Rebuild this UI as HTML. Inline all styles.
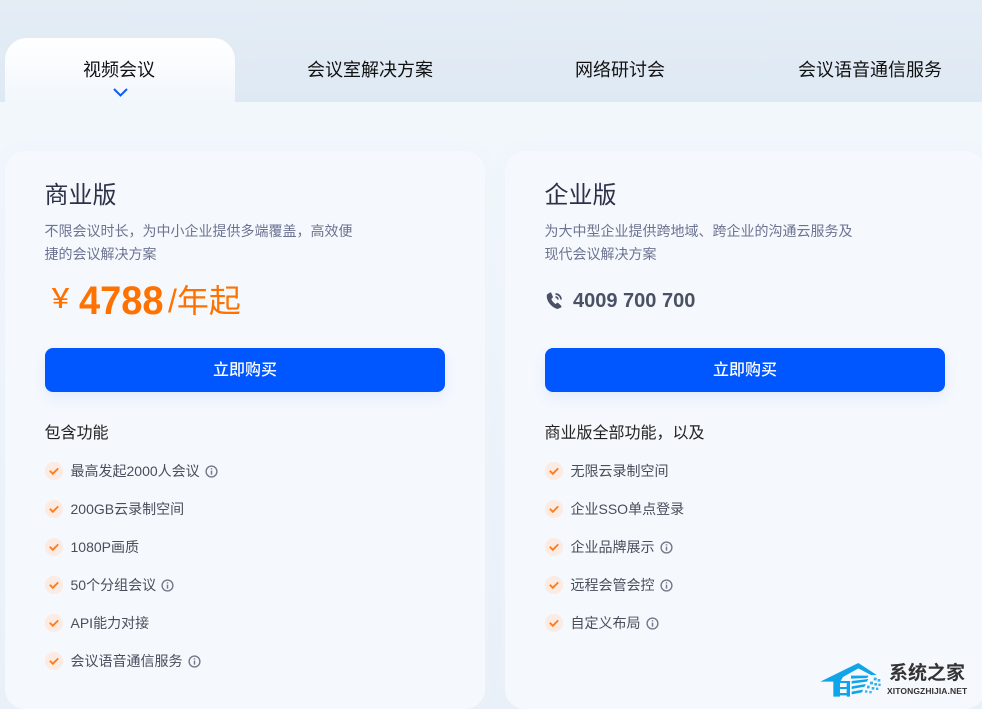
<!DOCTYPE html>
<html lang="zh"><head><meta charset="utf-8"><style>
html,body{margin:0;padding:0;overflow:hidden;width:982px;height:709px}
#w{width:982px;height:709px;overflow:hidden;position:relative;background:#f2f6fb;font-family:"Liberation Sans","Noto Sans CJK SC",sans-serif}
.a{position:absolute;white-space:nowrap}
.band{left:0;top:0;width:982px;height:102px;background:linear-gradient(180deg,#e4edf6,#dfe9f3)}
.lower{left:0;top:102px;width:982px;height:607px;background:linear-gradient(180deg,#f2f7fc 5%,#e9f0f8)}
.tab0{left:5px;top:38px;width:230px;height:64px;border-radius:22px 22px 0 0;background:linear-gradient(180deg,#fff,#f2f7fc)}
.t{top:58px;font-size:18px;line-height:25px;color:#111;text-align:center}
.card{top:151px;width:480px;height:558px;border-radius:20px;background:#f5f8fd;box-shadow:0 0 14px rgba(238,243,250,.8)}
h3{position:absolute;margin:0;top:180px;font-size:24px;line-height:32px;font-weight:400;color:#2e3249}
.d{top:220px;font-size:14px;line-height:22.500px;color:#6c7391}
.btn{top:348px;width:400px;height:44px;border-radius:8px;background:#0056ff;color:#fff;font-size:16px;font-weight:500;line-height:45px;text-align:center;box-shadow:0 6px 14px rgba(0,86,255,.08)}
.h{top:423px;font-size:16px;line-height:22px;color:#222}
.i{font-size:14px;line-height:20px;color:#4a4d5a}
.c{width:18px;height:18px}
.n{width:13px;height:13px}
</style></head><body><div id="w">
<div class="a band"></div><div class="a lower"></div><div class="a tab0"></div>
<div class="a t" style="left:4px;width:230px">视频会议</div>
<svg class="a" style="left:112px;top:87px" width="17" height="11" viewBox="0 0 17 11"><path d="M2 2l6.500 6.500L15 2" fill="none" stroke="#0d5cf5" stroke-width="2"/></svg>
<div class="a t" style="left:255px;width:230px">会议室解决方案</div>
<div class="a t" style="left:505px;width:230px">网络研讨会</div>
<div class="a t" style="left:755px;width:230px">会议语音通信服务</div>

<div class="a card" style="left:5px"></div><div class="a card" style="left:505px"></div>

<h3 style="left:44.500px">商业版</h3>
<div class="a d" style="left:44.500px">不限会议时长，为中小企业提供多端覆盖，高效便<br>捷的会议解决方案</div>
<div class="a" style="left:47px;top:281px;font-size:27px;line-height:36px;font-weight:500;color:#ff7200">￥</div>
<div class="a" style="left:79px;top:277px;font-size:40px;line-height:48px;font-weight:700;color:#ff7200;transform-origin:0 50%;transform:scaleX(.95)">4788</div>
<div class="a" style="left:168px;top:279px;font-size:32px;line-height:44px;color:#ff7200">/年起</div>
<div class="a btn" style="left:45px">立即购买</div>
<div class="a h" style="left:44.500px">包含功能</div>

<h3 style="left:544.500px">企业版</h3>
<div class="a d" style="left:544.500px">为大中型企业提供跨地域、跨企业的沟通云服务及<br>现代会议解决方案</div>
<svg class="a" style="left:545px;top:291px" width="19" height="19" viewBox="0 0 19 19"><path d="M5 1.500L2 3.500C.8 8 4.500 15.500 12.500 18l3.500-1.500c.7-.6.6-1.300 0-1.900l-2.600-2.500c-.6-.5-1.200-.5-1.700 0l-1 1C8.200 11.500 7 9.800 6.300 8l1.200-1c.5-.5.5-1.100.2-1.700L6.300 2C5.900 1.400 5.500 1.300 5 1.500z" fill="#4a5164"/><path d="M10.500 3a5.500 5.500 0 0 1 5.500 5.500M10.500 6a2.500 2.500 0 0 1 2.500 2.500" fill="none" stroke="#4a5164" stroke-width="1.700"/></svg>
<div class="a" style="left:573px;top:287px;font-size:20px;line-height:28px;font-weight:700;color:#4a5164">4009 700 700</div>
<div class="a btn" style="left:545px">立即购买</div>
<div class="a h" style="left:544.500px">商业版全部功能，以及</div>

<svg width="0" height="0" style="position:absolute"><defs>
<symbol id="ck" viewBox="0 0 18 18"><circle cx="9" cy="9" r="9" fill="#fbebe3"/><path d="M4.800 8.800l3 3 5.400-5.400" fill="none" stroke="#ff7a1a" stroke-width="1.800"/></symbol>
<symbol id="nf" viewBox="0 0 13 13"><circle cx="6.500" cy="6.500" r="5.400" fill="none" stroke="#737989" stroke-width="1.400"/><path d="M6.500 5.600v4M6.500 3.200v1.300" stroke="#737989" stroke-width="1.500"/></symbol>
</defs></svg>

<svg class="a c" style="left:45px;top:462px"><use href="#ck"/></svg><div class="a i" style="left:70.500px;top:461px">最高发起2000人会议</div><svg class="a n" style="left:205px;top:465px"><use href="#nf"/></svg>
<svg class="a c" style="left:45px;top:500px"><use href="#ck"/></svg><div class="a i" style="left:70.500px;top:499px">200GB云录制空间</div>
<svg class="a c" style="left:45px;top:538px"><use href="#ck"/></svg><div class="a i" style="left:70.500px;top:537px">1080P画质</div>
<svg class="a c" style="left:45px;top:576px"><use href="#ck"/></svg><div class="a i" style="left:70.500px;top:575px">50个分组会议</div><svg class="a n" style="left:161px;top:579px"><use href="#nf"/></svg>
<svg class="a c" style="left:45px;top:614px"><use href="#ck"/></svg><div class="a i" style="left:70.500px;top:613px">API能力对接</div>
<svg class="a c" style="left:45px;top:652px"><use href="#ck"/></svg><div class="a i" style="left:70.500px;top:651px">会议语音通信服务</div><svg class="a n" style="left:188px;top:655px"><use href="#nf"/></svg>

<svg class="a c" style="left:545px;top:462px"><use href="#ck"/></svg><div class="a i" style="left:570.500px;top:461px">无限云录制空间</div>
<svg class="a c" style="left:545px;top:500px"><use href="#ck"/></svg><div class="a i" style="left:570.500px;top:499px">企业SSO单点登录</div>
<svg class="a c" style="left:545px;top:538px"><use href="#ck"/></svg><div class="a i" style="left:570.500px;top:537px">企业品牌展示</div><svg class="a n" style="left:660px;top:541px"><use href="#nf"/></svg>
<svg class="a c" style="left:545px;top:576px"><use href="#ck"/></svg><div class="a i" style="left:570.500px;top:575px">远程会管会控</div><svg class="a n" style="left:660px;top:579px"><use href="#nf"/></svg>
<svg class="a c" style="left:545px;top:614px"><use href="#ck"/></svg><div class="a i" style="left:570.500px;top:613px">自定义布局</div><svg class="a n" style="left:646px;top:617px"><use href="#nf"/></svg>

<svg class="a" style="left:815px;top:655px" width="80" height="50" viewBox="0 0 240 150">
<path d="M16 80L130 24l55 36h-17l-38-20-46 26-8 14z" fill="#10a4e8"/>
<path d="M55 78h20v47H55zM75 78h30v6H75zM75 96h30v6H75zM75 114h30v7H75zM95 78h10v47H95z" fill="#10a4e8"/>
<path d="M108 62l52 0-3 7-49 2zM110 78l50-6-4 8-46 6zM110 94l42-7-3 8-39 7zM110 110l34-6-3 8-31 6z" fill="#10a4e8"/>
<path d="M176 68h9v8h-9zM188 72h8v8h-8zM165 80h9v8h-9zM178 84h8v8h-8zM190 86h7v7h-7zM156 92h8v8h-8zM170 96h8v8h-8zM183 98h7v7h-7zM150 106h7v7h-7zM163 108h7v7h-7z" fill="#2fb4ec"/></svg>
<div class="a" style="left:889px;top:662px;font-size:19px;line-height:24px;font-weight:700;color:#333">系统之家</div>
<div class="a" style="left:887px;top:685px;font-size:8.500px;line-height:12px;font-weight:700;color:#333;letter-spacing:.1px">XITONGZHIJIA.NET</div>
</div></body></html>
